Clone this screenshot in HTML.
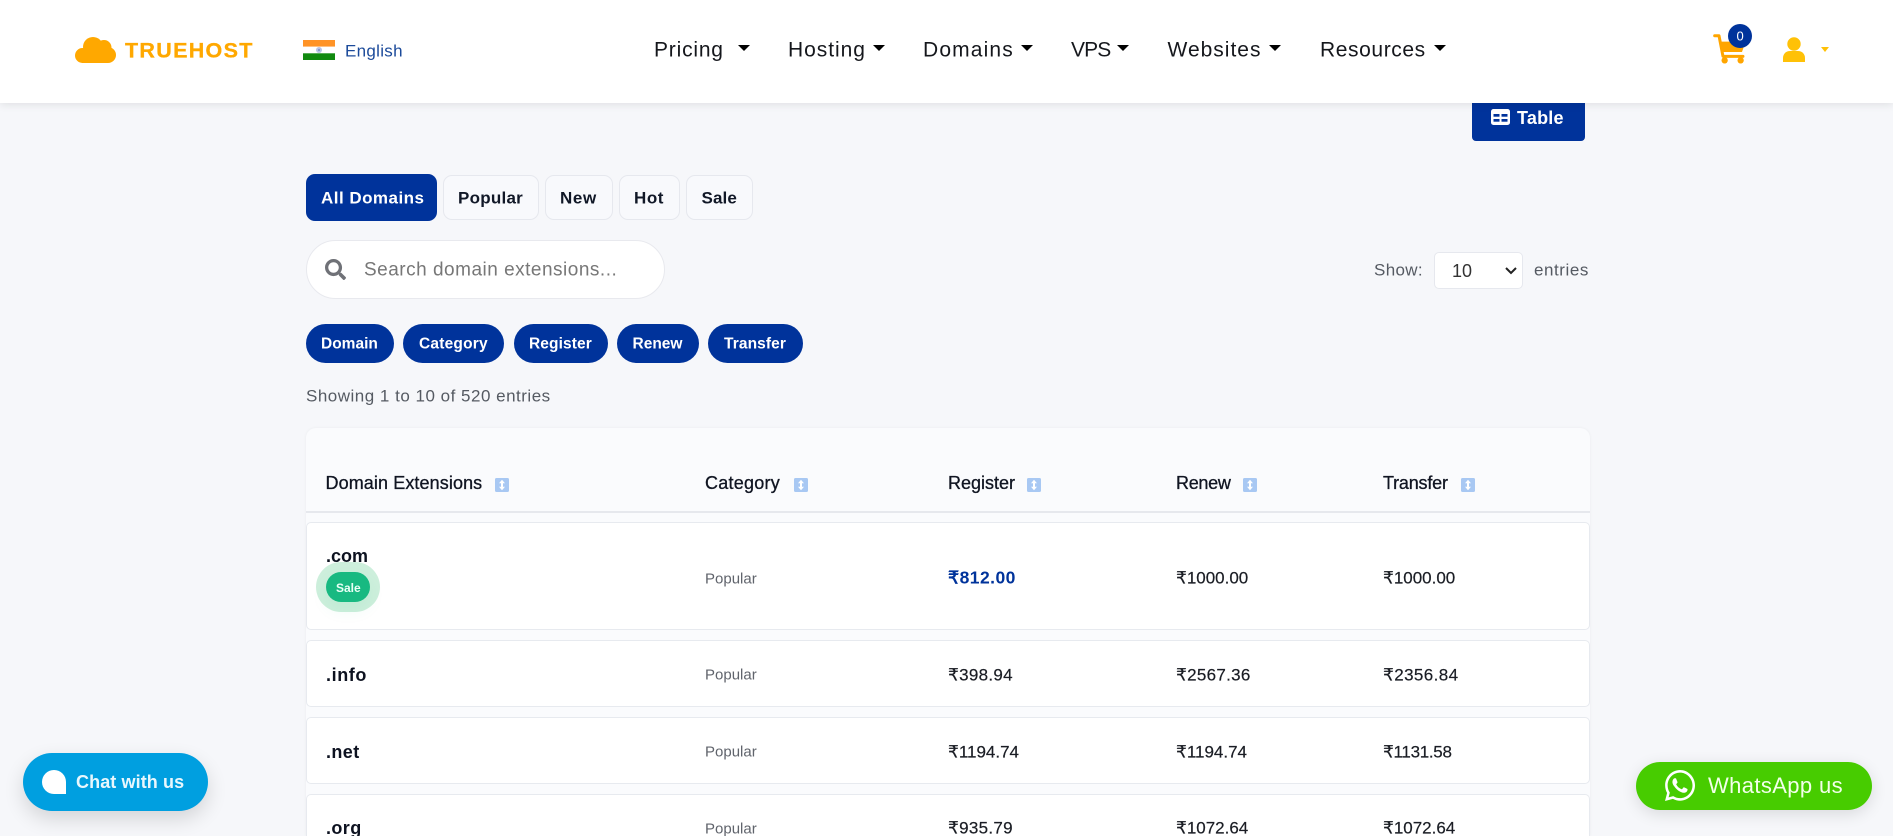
<!DOCTYPE html>
<html lang="en">
<head>
<meta charset="utf-8">
<title>Truehost Domains</title>
<style>
html,body{margin:0;padding:0;width:1893px;height:836px;overflow:hidden;background:#f6f7fa;font-family:"Liberation Sans",sans-serif;color:#111827}
#page{position:absolute;left:0;top:0;width:1893px;height:836px;overflow:hidden;background:#f6f7fa}
.t{position:absolute;white-space:nowrap;line-height:1;transform:translateY(-50%)}
.b{position:absolute;box-sizing:border-box}
svg{position:absolute;display:block}
header{position:absolute;left:0;top:0;width:1893px;height:103px;background:#fff;box-shadow:0 2px 8px rgba(0,0,0,.09);z-index:5}
.nav{font-size:21px;color:#15171c;top:50px}
.caret{position:absolute;width:0;height:0;border-left:6px solid transparent;border-right:6px solid transparent;border-top:6.5px solid #000;top:45px}
.tab{background:#f8f9fc;border:1px solid #e6e8ee;border-radius:9px;top:175px;height:45px}
.ft{font-size:17px;font-weight:bold;color:#111827;top:198px}
.pill{background:#00339b;border-radius:20px;top:324px;height:39px}
.pt{font-size:15.5px;font-weight:bold;color:#fff;top:343.5px}
.th{font-size:18px;color:#101522;top:483px;-webkit-text-stroke:.3px #101522}
.row{left:306px;width:1284px;background:#fff;border:1px solid #e7eaef;border-radius:5px}
.dom{font-size:18px;font-weight:bold;color:#0d1220;left:326px}
.cat{font-size:15px;color:#60646c;left:705px}
.pr{font-size:17px;color:#1a1d24;-webkit-text-stroke:.2px #1a1d24}
.sort{width:14px;height:14px;top:478px}
</style>
</head>
<body>
<svg width="0" height="0" style="position:absolute"><defs>
<g id="s"><rect width="14" height="14" rx="1.5" fill="#a8c8f3"/><path d="M7 1.8 10 5.2H8V8.8h2L7 12.2 4 8.8h2V5.2H4z" fill="#fff"/></g>
</defs></svg>
<div id="page">
<header>
  <svg style="left:75px;top:37px" width="41" height="26" viewBox="0 0 41 26" fill="#ffa800"><circle cx="7.5" cy="18.5" r="7.5"/><circle cx="18" cy="10" r="10"/><circle cx="29" cy="10.5" r="7.5"/><circle cx="33" cy="18" r="8"/><rect x="7" y="14" width="26" height="12"/></svg>
  <div class="t" style="left:125px;top:50.5px;font-size:21.5px;font-weight:bold;color:#ffa800;letter-spacing:1.3px;-webkit-text-stroke:.3px #ffa800">TRUEHOST</div>
  <svg style="left:303px;top:40px" width="32" height="20" viewBox="0 0 32 20"><rect width="32" height="6.7" fill="#ff9326"/><rect y="6.7" width="32" height="6.6" fill="#fff"/><rect y="13.3" width="32" height="6.7" fill="#118a10"/><circle cx="16" cy="10" r="3" fill="#b9c4e6"/><circle cx="16" cy="10" r="1" fill="#7a8bc8"/></svg>
  <div class="t" style="left:345px;top:51px;font-size:17px;color:#1b4a9a;letter-spacing:.3px">English</div>

  <div class="t nav" style="left:654px;letter-spacing:.8px">Pricing</div><div class="caret" style="left:738px"></div>
  <div class="t nav" style="left:788px;letter-spacing:.95px">Hosting</div><div class="caret" style="left:872.5px"></div>
  <div class="t nav" style="left:923px;letter-spacing:1.15px">Domains</div><div class="caret" style="left:1020.5px"></div>
  <div class="t nav" style="left:1071px;letter-spacing:-.9px">VPS</div><div class="caret" style="left:1117px"></div>
  <div class="t nav" style="left:1167.5px;letter-spacing:1px">Websites</div><div class="caret" style="left:1269px"></div>
  <div class="t nav" style="left:1320px;letter-spacing:.6px">Resources</div><div class="caret" style="left:1434px"></div>

  <svg style="left:1713.3px;top:33.3px" width="33.3" height="31.7" viewBox="70 70 100 95"><path d="M75 78H88L100 140H160" fill="none" stroke="#ffa500" stroke-width="9" stroke-linecap="round" stroke-linejoin="round"/><path d="M93 96H168L157 127H99z" fill="#ffa500"/><circle cx="105" cy="152" r="9.5" fill="#ffa500"/><circle cx="153" cy="152" r="9.5" fill="#ffa500"/></svg>
  <div class="b" style="left:1728px;top:24px;width:24px;height:24px;border-radius:50%;background:#00339b"></div>
  <div class="t" style="left:1736.5px;top:36px;font-size:13px;color:#fff">0</div>
  <svg style="left:1783px;top:37px" width="22" height="25" viewBox="0 0 22 25" fill="#ffc107"><circle cx="11" cy="7" r="6.7"/><path d="M0 25v-4c0-4 3-7 7-7h8c4 0 7 3 7 7v4z"/></svg>
  <div class="caret" style="left:1821px;top:47px;border-left-width:4px;border-right-width:4px;border-top:5px solid #ffc107"></div>
</header>

<!-- Table toggle -->
<div class="b" style="left:1472px;top:90px;width:113px;height:51px;background:#00339b;border-radius:0 0 4px 4px"></div>
<svg style="left:1491px;top:109px" width="19" height="16" viewBox="0 0 19 16"><rect width="19" height="16" rx="2.5" fill="#fff"/><rect x="2.5" y="5" width="6" height="2.7" fill="#00339b"/><rect x="10.5" y="5" width="6" height="2.7" fill="#00339b"/><rect x="2.5" y="10" width="6" height="2.7" fill="#00339b"/><rect x="10.5" y="10" width="6" height="2.7" fill="#00339b"/></svg>
<div class="t" style="left:1517px;top:117.5px;font-size:18px;font-weight:bold;color:#fff;letter-spacing:.2px">Table</div>

<!-- Filters -->
<div class="b" style="left:306px;top:174px;width:131px;height:47px;background:#00339b;border-radius:9px"></div>
<div class="t ft" style="left:321px;color:#fff;letter-spacing:.47px">All Domains</div>
<div class="b tab" style="left:443px;width:96px"></div><div class="t ft" style="left:458px;letter-spacing:.25px">Popular</div>
<div class="b tab" style="left:545px;width:68px"></div><div class="t ft" style="left:560px;letter-spacing:.65px">New</div>
<div class="b tab" style="left:619px;width:61px"></div><div class="t ft" style="left:634px;letter-spacing:.55px">Hot</div>
<div class="b tab" style="left:686px;width:67px"></div><div class="t ft" style="left:701.5px;letter-spacing:.1px">Sale</div>

<!-- Search -->
<div class="b" style="left:306px;top:240px;width:359px;height:59px;background:#fff;border:1px solid #e8e9ee;border-radius:30px"></div>
<svg style="left:325px;top:259px" width="21" height="21" viewBox="0 0 512 512" fill="#6f7177"><path d="M505 442.7L405.3 343c-4.5-4.5-10.6-7-17-7H372c27.6-35.3 44-79.7 44-128C416 93.1 322.9 0 208 0S0 93.1 0 208s93.1 208 208 208c48.3 0 92.7-16.4 128-44v16.3c0 6.4 2.5 12.5 7 17l99.7 99.7c9.4 9.4 24.6 9.4 33.9 0l28.3-28.3c9.4-9.4 9.4-24.6.1-34zM208 336c-70.7 0-128-57.2-128-128 0-70.7 57.2-128 128-128 70.7 0 128 57.2 128 128 0 70.7-57.2 128-128 128z"/></svg>
<div class="t" style="left:364px;top:270px;font-size:19px;color:#777;letter-spacing:.5px">Search domain extensions...</div>

<!-- Show entries -->
<div class="t" style="left:1374px;top:270px;font-size:17px;color:#555a62;letter-spacing:.35px">Show:</div>
<div class="b" style="left:1434px;top:252px;width:89px;height:37px;background:#fff;border:1px solid #e6e8ee;border-radius:5px"></div>
<div class="t" style="left:1452px;top:271px;font-size:18px;color:#333">10</div>
<svg style="left:1505px;top:266px" width="12" height="9" viewBox="0 0 12 9"><path d="M1 2l5 5 5-5" fill="none" stroke="#222" stroke-width="2"/></svg>
<div class="t" style="left:1534px;top:270px;font-size:17px;color:#555a62;letter-spacing:.55px">entries</div>

<!-- Sort pills -->
<div class="b pill" style="left:306px;width:88px"></div><div class="t pt" style="left:321px">Domain</div>
<div class="b pill" style="left:403px;width:101px"></div><div class="t pt" style="left:419px;letter-spacing:.2px">Category</div>
<div class="b pill" style="left:514px;width:94px"></div><div class="t pt" style="left:529px;letter-spacing:.1px">Register</div>
<div class="b pill" style="left:617px;width:82px"></div><div class="t pt" style="left:632.5px">Renew</div>
<div class="b pill" style="left:708px;width:95px"></div><div class="t pt" style="left:724px;letter-spacing:.1px">Transfer</div>

<div class="t" style="left:306px;top:396px;font-size:17px;color:#555a62;letter-spacing:.5px">Showing 1 to 10 of 520 entries</div>

<!-- Table -->
<div class="b" style="left:306px;top:428px;width:1284px;height:408px;background:#fafbfd;border-radius:10px 10px 0 0;box-shadow:0 0 3px rgba(0,0,0,.05)"></div>
<div class="b" style="left:306px;top:511px;width:1284px;height:2px;background:#e6e8ed"></div>

<div class="t th" style="left:325.5px;letter-spacing:.1px">Domain Extensions</div>
<svg class="sort" style="left:495px"><use href="#s"/></svg>
<div class="t th" style="left:705px;letter-spacing:.25px">Category</div>
<svg class="sort" style="left:793.5px"><use href="#s"/></svg>
<div class="t th" style="left:948px">Register</div>
<svg class="sort" style="left:1027px"><use href="#s"/></svg>
<div class="t th" style="left:1176px;letter-spacing:-.3px">Renew</div>
<svg class="sort" style="left:1243px"><use href="#s"/></svg>
<div class="t th" style="left:1383px;letter-spacing:-.2px">Transfer</div>
<svg class="sort" style="left:1461px"><use href="#s"/></svg>

<div class="b row" style="top:522px;height:108px"></div>
<div class="t dom" style="top:556px">.com</div>
<div class="b" style="left:326px;top:572px;width:44px;height:30px;background:#18b981;border-radius:15px;box-shadow:0 0 0 10px rgba(46,190,110,.24),0 8px 16px rgba(24,185,129,.08)"></div>
<div class="t" style="left:336px;top:588px;font-size:12px;font-weight:bold;color:#eafff6">Sale</div>
<div class="t cat" style="top:579px">Popular</div>
<div class="t pr" style="left:948px;top:577.5px;font-weight:bold;font-size:17.5px;color:#00339b;letter-spacing:.45px;-webkit-text-stroke:0">₹812.00</div>
<div class="t pr" style="left:1176px;top:577.5px">₹1000.00</div>
<div class="t pr" style="left:1383px;top:577.5px">₹1000.00</div>

<div class="b row" style="top:640px;height:67px"></div>
<div class="t dom" style="top:675px;letter-spacing:.6px">.info</div>
<div class="t cat" style="top:675px">Popular</div>
<div class="t pr" style="left:948px;top:675px;letter-spacing:.3px">₹398.94</div>
<div class="t pr" style="left:1176px;top:675px;letter-spacing:.3px">₹2567.36</div>
<div class="t pr" style="left:1383px;top:675px;letter-spacing:.4px">₹2356.84</div>

<div class="b row" style="top:717px;height:67px"></div>
<div class="t dom" style="top:752px;letter-spacing:.4px">.net</div>
<div class="t cat" style="top:752px">Popular</div>
<div class="t pr" style="left:948px;top:752px">₹1194.74</div>
<div class="t pr" style="left:1176px;top:752px">₹1194.74</div>
<div class="t pr" style="left:1383px;top:752px;letter-spacing:-.3px">₹1131.58</div>

<div class="b row" style="top:794px;height:42px;border-bottom:0;border-radius:5px 5px 0 0"></div>
<div class="t dom" style="top:828px;letter-spacing:.4px">.org</div>
<div class="t cat" style="top:829px">Popular</div>
<div class="t pr" style="left:948px;top:828px;letter-spacing:.3px">₹935.79</div>
<div class="t pr" style="left:1176px;top:828px">₹1072.64</div>
<div class="t pr" style="left:1383px;top:828px">₹1072.64</div>

<!-- Chat -->
<div class="b" style="left:23px;top:753px;width:185px;height:58px;background:#009fe0;border-radius:29px;box-shadow:0 8px 20px rgba(0,0,0,.14)"></div>
<div class="b" style="left:42px;top:770px;width:24px;height:24px;background:#fff;border-radius:12px 12px 0 12px"></div>
<div class="t" style="left:76px;top:782px;font-size:18px;font-weight:bold;color:#e8f7fd;letter-spacing:.1px">Chat with us</div>

<!-- WhatsApp -->
<div class="b" style="left:1636px;top:762px;width:236px;height:48px;background:#47cc00;border-radius:24px;box-shadow:0 4px 16px rgba(0,0,0,.12)"></div>
<svg style="left:1665px;top:770px" width="30" height="31" viewBox="0 32 448 448" fill="#fff" preserveAspectRatio="none"><path d="M380.9 97.1C339 55.1 283.2 32 223.9 32c-122.4 0-222 99.6-222 222 0 39.1 10.2 77.3 29.6 111L0 480l117.7-30.9c32.4 17.7 68.9 27 106.1 27h.1c122.3 0 224.1-99.6 224.1-222 0-59.3-25.2-115-67.1-157zm-157 341.6c-33.2 0-65.7-8.9-94-25.7l-6.7-4-69.8 18.3L72 359.2l-4.4-7c-18.5-29.4-28.2-63.3-28.2-98.2 0-101.7 82.8-184.5 184.6-184.5 49.3 0 95.6 19.2 130.4 54.1 34.8 34.9 56.2 81.2 56.1 130.5 0 101.8-84.9 184.6-186.6 184.6zm101.2-138.2c-5.5-2.8-32.8-16.2-37.9-18-5.1-1.9-8.8-2.8-12.5 2.8-3.7 5.6-14.3 18-17.6 21.8-3.2 3.7-6.5 4.2-12 1.4-32.6-16.3-54-29.1-75.5-66-5.7-9.8 5.7-9.1 16.3-30.3 1.8-3.7.9-6.9-.5-9.7-1.4-2.8-12.5-30.1-17.1-41.2-4.5-10.8-9.1-9.3-12.5-9.5-3.2-.2-6.9-.2-10.6-.2-3.7 0-9.7 1.4-14.8 6.9-5.1 5.6-19.4 19-19.4 46.3 0 27.3 19.9 53.7 22.6 57.4 2.8 3.7 39.1 59.7 94.8 83.8 35.2 15.2 49 16.5 66.6 13.9 10.7-1.6 32.8-13.4 37.4-26.4 4.6-13 4.6-24.1 3.2-26.4-1.3-2.5-5-3.9-10.5-6.6z"/></svg>
<div class="t" style="left:1708px;top:785.5px;font-size:22px;color:#f2ffe9;letter-spacing:.38px">WhatsApp us</div>
</div>
</body>
</html>
